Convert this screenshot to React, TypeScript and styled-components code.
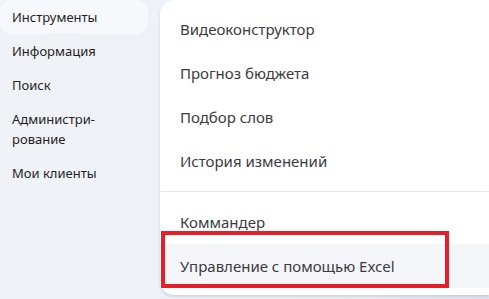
import styled, { createGlobalStyle } from 'styled-components'

const GlobalStyle = createGlobalStyle`
    html, body {
        margin: 0;
        padding: 0;
        width: 100%;
        height: 100%;
        overflow: hidden;
        background: #eef1f6;
    }
    #root {
        height: 100%;
    }
`

const Page = styled.div`
    display: flex;
    width: 489px;
    height: 299px;
    font-family: 'Noto Sans', 'Open Sans', sans-serif;
    background: linear-gradient(90deg, #eff2f7 0%, #eef1f6 70%, #e5e8f1 100%);
`

/* left menu */
const Sidebar = styled.nav`
    display: flex;
    flex-direction: column;
    width: 160px;
    flex-shrink: 0;
    padding-right: 12px;
    box-sizing: border-box;
`

const SideItem = styled.div<{ $active?: boolean }>`
    padding: 7px 12px;
    font-size: 13px;
    line-height: 20px;
    color: #1f1f24;
    border-radius: 12px;
    background: ${(p) => (p.$active ? '#f7f8fb' : 'transparent')};
    cursor: pointer;
`

/* dropdown panel */
const Panel = styled.div`
    flex: 1;
    display: flex;
    flex-direction: column;
    align-self: flex-start;
    height: 295px;
    padding: 7px 0;
    box-sizing: border-box;
    background: #ffffff;
    border-radius: 14px 0 0 14px;
    box-shadow: 0 2px 3px rgba(120, 125, 160, 0.25);
`

const MenuRow = styled.div<{ $highlight?: boolean }>`
    position: relative;
    display: flex;
    align-items: center;
    height: 44px;
    flex-shrink: 0;
    padding-left: 20px;
    font-size: 15px;
    color: #3b3b40;
    background: ${(p) => (p.$highlight ? '#f5f6fa' : 'transparent')};
`

const Divider = styled.div`
    height: 1px;
    margin: 8px 0;
    background: #e4e4ee;
    flex-shrink: 0;
`

const Marker = styled.div`
    position: absolute;
    left: 1px;
    top: -13px;
    width: 288px;
    height: 57px;
    border: 4px solid #e61e27;
    box-sizing: border-box;
    pointer-events: none;
`

export default function App() {
    return (
        <>
            <GlobalStyle />
            <Page>
                <Sidebar>
                    <SideItem $active>Инструменты</SideItem>
                    <SideItem>Информация</SideItem>
                    <SideItem>Поиск</SideItem>
                    <SideItem>Администри-<br />рование</SideItem>
                    <SideItem>Мои клиенты</SideItem>
                </Sidebar>
                <Panel>
                    <MenuRow>Видеоконструктор</MenuRow>
                    <MenuRow>Прогноз бюджета</MenuRow>
                    <MenuRow>Подбор слов</MenuRow>
                    <MenuRow>История изменений</MenuRow>
                    <Divider />
                    <MenuRow>Коммандер</MenuRow>
                    <MenuRow $highlight>
                        Управление с помощью Excel
                        <Marker />
                    </MenuRow>
                </Panel>
            </Page>
        </>
    )
}
